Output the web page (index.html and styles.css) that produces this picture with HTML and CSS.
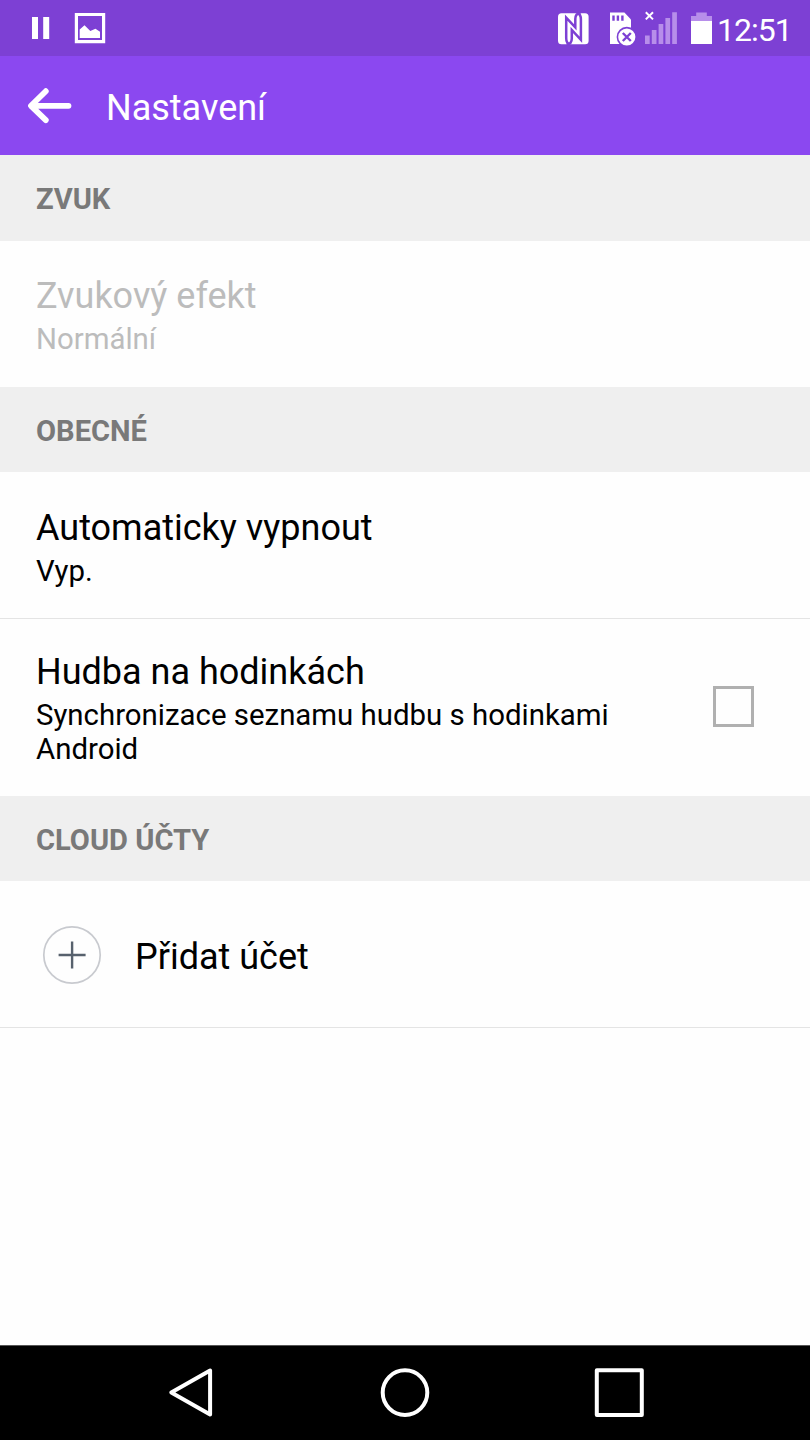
FILE: index.html
```html
<!DOCTYPE html>
<html lang="cs">
<head>
<meta charset="utf-8">
<title>Nastavení</title>
<link rel="stylesheet" href="styles.css">
</head>
<body>
<div class="screen">
  <div class="status">
    <svg class="status-left" width="90" height="56" viewBox="24 0 90 56">
      <path fill="#fff" d="M32 17h6v22h-6zM43.2 17h6v22h-6z"/>
      <path fill="none" stroke="#fff" stroke-width="3.2" d="M76.4 14.5h27.2v27.2H76.4z"/>
      <path fill="#fff" d="M79.7 38V29.5l4.8-4.3 5.8 5.8 5.2-2.2 4.5 3V38z"/>
    </svg>
    <svg class="status-right" width="160" height="56" viewBox="555 0 160 56">
      <rect x="558" y="13.2" width="30.6" height="31" rx="3.5" fill="#fff"/>
      <g fill="none" stroke="#7d40d4" stroke-width="2.5">
        <path d="M580.5 12.8c-4 .6-5.2 2.6-5.2 6.2v8.4L566.2 17.6V38c0 3.6 1 5.4 3.4 6.4"/>
        <path d="M566.6 44.6c4-.6 5.2-2.6 5.2-6.2V30l9.1 9.8V19.4c0-3.6-1-5.4-3.4-6.4"/>
      </g>
      <path fill="#fff" d="M610 12.5h14.4l6.6 7V44h-21z"/>
      <path fill="#7d40d4" d="M612.3 15.5h2.4v5.3h-2.4zM616.7 15.5h2.4v5.3h-2.4zM621.2 15.5h2.4v5.3h-2.4z"/>
      <circle cx="626.8" cy="37" r="10.2" fill="#7d40d4"/>
      <circle cx="626.8" cy="37" r="8.6" fill="#fff"/>
      <path fill="none" stroke="#7d40d4" stroke-width="2.4" d="M622.8 33l8 8M630.8 33l-8 8"/>
      <path fill="none" stroke="#fff" stroke-width="2" d="M645.8 12.2l7.2 7.2M653 12.2l-7.2 7.2"/>
      <path fill="#b78eea" d="M645 35.5h4.7V44H645zM651.8 30h4.7v14h-4.7zM658.6 24h4.7v20h-4.7zM665.4 18h4.7v26h-4.7zM672.2 12.3h4.7V44h-4.7z"/>
      <path fill="#b78eea" d="M696.2 12.5h10.6V16h5.2v5.2h-21V16h5.2z"/>
      <path fill="#fff" d="M691 21h21v23h-21z"/>
    </svg>
    <span class="clock">12:51</span>
  </div>
  <header class="appbar">
    <svg width="50" height="40" viewBox="25 86 50 40">
      <path fill="none" stroke="#fff" stroke-width="5.8" stroke-linecap="round" stroke-linejoin="round" d="M45.8 91.2L31 105.8l14.8 14.4M31.5 105.8H68.5"/>
    </svg>
    <h1 class="appbar-title">Nastavení</h1>
  </header>
  <main class="content">
    <h2 class="section">ZVUK</h2>
    <div class="row row-disabled">
      <div class="texts">
        <div class="title">Zvukový efekt</div>
        <div class="sub">Normální</div>
      </div>
    </div>
    <h2 class="section">OBECNÉ</h2>
    <div class="row row-line">
      <div class="texts">
        <div class="title">Automaticky vypnout</div>
        <div class="sub">Vyp.</div>
      </div>
    </div>
    <div class="row row-tall">
      <div class="texts">
        <div class="title">Hudba na hodinkách</div>
        <div class="sub">Synchronizace seznamu hudbu s hodinkami Android</div>
      </div>
      <span class="checkbox"></span>
    </div>
    <h2 class="section">CLOUD ÚČTY</h2>
    <div class="row row-account">
      <svg width="60" height="60" viewBox="0 0 60 60">
        <circle cx="30" cy="30" r="28.2" fill="none" stroke="#c8cacf" stroke-width="1.7"/>
        <path fill="none" stroke="#57616d" stroke-width="2.4" d="M16.6 30h27M30.1 16.5v27"/>
      </svg>
      <div class="title">Přidat účet</div>
    </div>
  </main>
  <nav class="nav">
    <svg width="810" height="94" viewBox="0 1346 810 94">
      <g fill="none" stroke="#fff" stroke-width="4" stroke-linejoin="round">
        <path d="M210.1 1370.6v44L171.3 1392.6z"/>
        <circle cx="405" cy="1392.6" r="22.3"/>
        <path d="M596.8 1370.3h45v44.6h-45z"/>
      </g>
    </svg>
  </nav>
</div>
</body>
</html>
```
FILE: styles.css
```css
* { box-sizing: border-box; }

body {
  margin: 0;
  font-family: Roboto, "Noto Sans", sans-serif;
  color: #000;
  background: #fefefe;
}

h1, h2 { margin: 0; }
svg { display: block; flex: none; }

.screen {
  display: flex;
  flex-direction: column;
  width: 810px;
  height: 1440px;
}

.status {
  display: flex;
  height: 56px;
  padding: 0 18px 0 24px;
  background: #7d40d4;
}

.status-right { margin-left: auto; }

.clock {
  width: 77px;
  padding-left: 2px;
  font-size: 32px;
  letter-spacing: -1px;
  line-height: 60px;
  color: #fff;
  white-space: nowrap;
}

.appbar {
  display: flex;
  align-items: center;
  gap: 31px;
  height: 99px;
  padding-left: 25px;
  background: #8b48f0;
}

.appbar-title {
  padding-top: 4px;
  font-size: 36px;
  font-weight: 400;
  line-height: 42px;
  color: #fff;
}

.content { flex: 1; }

.section {
  height: 85.5px;
  padding: 2px 36px 0;
  font-size: 29.1px;
  font-weight: 700;
  line-height: 85px;
  color: #797979;
  background: #efefef;
}

.row {
  display: flex;
  height: 146.3px;
  padding: 34.6px 36px 0;
}

.texts { width: 600px; }

.title {
  font-size: 36px;
  line-height: 42px;
}

.sub {
  margin-top: 5px;
  font-size: 29.4px;
  line-height: 34px;
}

.row-disabled { color: #bcbcbc; }

.row-line {
  border-bottom: 1px solid #e4e4e4;
}

.row-tall {
  height: 177px;
  padding-top: 32px;
  justify-content: space-between;
}

.checkbox {
  width: 41px;
  height: 41px;
  margin: 35px 20px 0 0;
  border: 3px solid #b0b0b0;
}

.row-account {
  align-items: center;
  gap: 33px;
  height: 147px;
  padding: 2px 42px 0;
  border-bottom: 1px solid #e4e4e4;
}

.row-account .title { padding-top: 3px; }

.nav {
  height: 95px;
  background: #000;
  border-top: 1px solid #555;
}
```
